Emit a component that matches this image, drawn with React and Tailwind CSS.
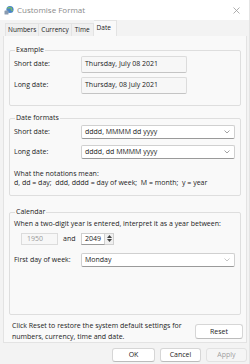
import React from 'react';

const font = { fontFamily: '"Open Sans", "Noto Sans", sans-serif' };

const GroupBox = ({ title, className, children }) => (
    <fieldset className={`border border-[#dedede] rounded-[2px] mx-[5px] ${className}`}>
        <legend className="ml-[5px] px-[1px] text-[7px] leading-[10px] text-[#1b1b1b]">{title}</legend>
        {children}
    </fieldset>
);

const Field = ({ value }) => (
    <div className="w-[106px] h-[17px] bg-[#f7f7f7] border border-[#dcdcdc] border-b-[#c4c4c4] rounded-[2px] flex items-center pl-[3px] text-[7px] text-[#1b1b1b]">
        {value}
    </div>
);

const Combo = ({ value, muted }) => (
    <div className="w-[154px] h-[14px] bg-white border border-[#d0d0d0] border-b-[#9a9a9a] rounded-[2px] flex items-center justify-between pl-[3px] pr-[4px] text-[7px] text-[#1b1b1b]">
        <span>{value}</span>
        <svg width="6" height="4" viewBox="0 0 6 4" className={muted ? 'opacity-60' : ''}>
            <path d="M0.5 0.5 L3 3 L5.5 0.5" fill="none" stroke="#8a8a8a" strokeWidth="0.8" />
        </svg>
    </div>
);

export default function App() {
    return (
        <div style={font} className="w-[250px] h-[364px] bg-[#f3f3f3] flex flex-col overflow-hidden border-r border-[#e4e4e4]">
            {/* title bar */}
            <div className="h-[20px] bg-white flex items-center pl-[4px] pr-[9px] shrink-0">
                <svg width="10" height="10" viewBox="0 0 10 10">
                    <circle cx="6" cy="4.5" r="3.6" fill="#4a86c8" />
                    <path d="M3.3 3.4 Q5 2 7.5 3.2 Q6.8 5 8.6 6" fill="none" stroke="#7ec05a" strokeWidth="1.1" />
                    <rect x="0.5" y="5.5" width="4" height="4" rx="0.6" fill="#8a9bb0" />
                </svg>
                <span className="ml-[3px] text-[8px] text-[#8a8a8a]">Customise Format</span>
                <svg width="7" height="7" viewBox="0 0 7 7" className="ml-auto">
                    <path d="M0.5 0.5 L6.5 6.5 M6.5 0.5 L0.5 6.5" stroke="#9a9a9a" strokeWidth="0.8" />
                </svg>
            </div>

            {/* tabs */}
            <div className="h-[16px] flex items-end pl-[5px] shrink-0 text-[6.5px] text-[#1b1b1b]">
                <div className="h-[13px] px-[2px] flex items-center bg-[#f0f0f0] border border-b-0 border-[#e3e3e3]">Numbers</div>
                <div className="h-[13px] px-[2px] flex items-center bg-[#f0f0f0] border border-b-0 border-l-0 border-[#e3e3e3]">Currency</div>
                <div className="h-[13px] px-[3px] flex items-center bg-[#f0f0f0] border border-b-0 border-l-0 border-[#e3e3e3]">Time</div>
                <div className="h-[16px] w-[23px] pl-[3px] flex items-start pt-[2px] bg-[#f9f9f9] border border-b-0 border-l-0 border-[#e3e3e3]">Date</div>
            </div>

            {/* tab panel */}
            <div className="ml-[3px] mr-[2px] h-[307px] bg-[#f9f9f9] border border-t-0 border-[#e3e3e3] flex flex-col pt-[9px] shrink-0">
                <GroupBox title="Example" className="h-[63px] pt-[1px]">
                    <div className="flex flex-col gap-[4px] text-[7px] text-[#1b1b1b]">
                        <div className="flex items-center">
                            <span className="w-[71px] pl-[4px]">Short date:</span>
                            <Field value="Thursday, July 08 2021" />
                        </div>
                        <div className="flex items-center">
                            <span className="w-[71px] pl-[4px]">Long date:</span>
                            <Field value="Thursday, 08 July 2021" />
                        </div>
                    </div>
                </GroupBox>

                <GroupBox title="Date formats" className="h-[86px] mt-[7px] pt-[2px]">
                    <div className="flex flex-col gap-[6px] text-[7px] text-[#1b1b1b]">
                        <div className="flex items-center">
                            <span className="w-[71px] pl-[4px]">Short date:</span>
                            <Combo value="dddd, MMMM dd yyyy" />
                        </div>
                        <div className="flex items-center">
                            <span className="w-[71px] pl-[4px]">Long date:</span>
                            <Combo value="dddd, dd MMMM yyyy" />
                        </div>
                    </div>
                    <div className="mt-[10px] pl-[4px] text-[7px] leading-[9px] text-[#1b1b1b]">
                        <div>What the notations mean:</div>
                        <div className="whitespace-pre">d, dd = day;  ddd, dddd = day of week;  M = month;  y = year</div>
                    </div>
                </GroupBox>

                <GroupBox title="Calendar" className="h-[111px] mt-[11px] pt-[2px]">
                    <div className="pl-[4px] text-[7px] text-[#1b1b1b]">When a two-digit year is entered, interpret it as a year between:</div>
                    <div className="flex items-center mt-[3px] pl-[11px] text-[7px] text-[#1b1b1b]">
                        <div className="w-[37px] h-[12px] border border-[#dcdcdc] bg-[#f7f7f7] flex items-center pl-[5px] text-[#9a9a9a]">1950</div>
                        <span className="ml-[5px] w-[18px]">and</span>
                        <div className="w-[24px] h-[12px] border border-[#d0d0d0] border-b-[#9a9a9a] bg-white flex items-center pl-[3px]">2049</div>
                        <div className="w-[9px] h-[12px] border border-l-0 border-[#d0d0d0] bg-[#f0f0f0] flex flex-col items-center justify-center gap-[1px]">
                            <svg width="5" height="3" viewBox="0 0 5 3"><path d="M0 3 L2.5 0 L5 3 Z" fill="#444" /></svg>
                            <svg width="5" height="3" viewBox="0 0 5 3"><path d="M0 0 L2.5 3 L5 0 Z" fill="#444" /></svg>
                        </div>
                    </div>
                    <div className="flex items-center mt-[8px] text-[7px] text-[#1b1b1b]">
                        <span className="w-[71px] pl-[4px] whitespace-nowrap">First day of week:</span>
                        <Combo value="Monday" muted />
                    </div>
                </GroupBox>

                <div className="flex items-center justify-between mt-[5px] pl-[8px] pr-[3px] text-[7px] leading-[11px] text-[#1b1b1b]">
                    <div>
                        <div>Click Reset to restore the system default settings for</div>
                        <div>numbers, currency, time and date.</div>
                    </div>
                    <div className="w-[48px] h-[15px] bg-white border border-[#d6d6d6] border-b-[#bcbcbc] rounded-[3px] flex items-center justify-center">Reset</div>
                </div>
            </div>

            {/* buttons */}
            <div className="flex justify-end gap-[5px] pr-[2px] mt-[5px] text-[7px] text-[#1b1b1b]">
                <div className="w-[43px] h-[14px] bg-white border border-[#d6d6d6] border-b-[#bcbcbc] rounded-[3px] flex items-center justify-center">OK</div>
                <div className="w-[41px] h-[14px] bg-white border border-[#d6d6d6] border-b-[#bcbcbc] rounded-[3px] flex items-center justify-center">Cancel</div>
                <div className="w-[41px] h-[14px] bg-[#f5f5f5] border border-[#e2e2e2] rounded-[3px] flex items-center justify-center text-[#a0a0a0]">Apply</div>
            </div>
        </div>
    );
}
